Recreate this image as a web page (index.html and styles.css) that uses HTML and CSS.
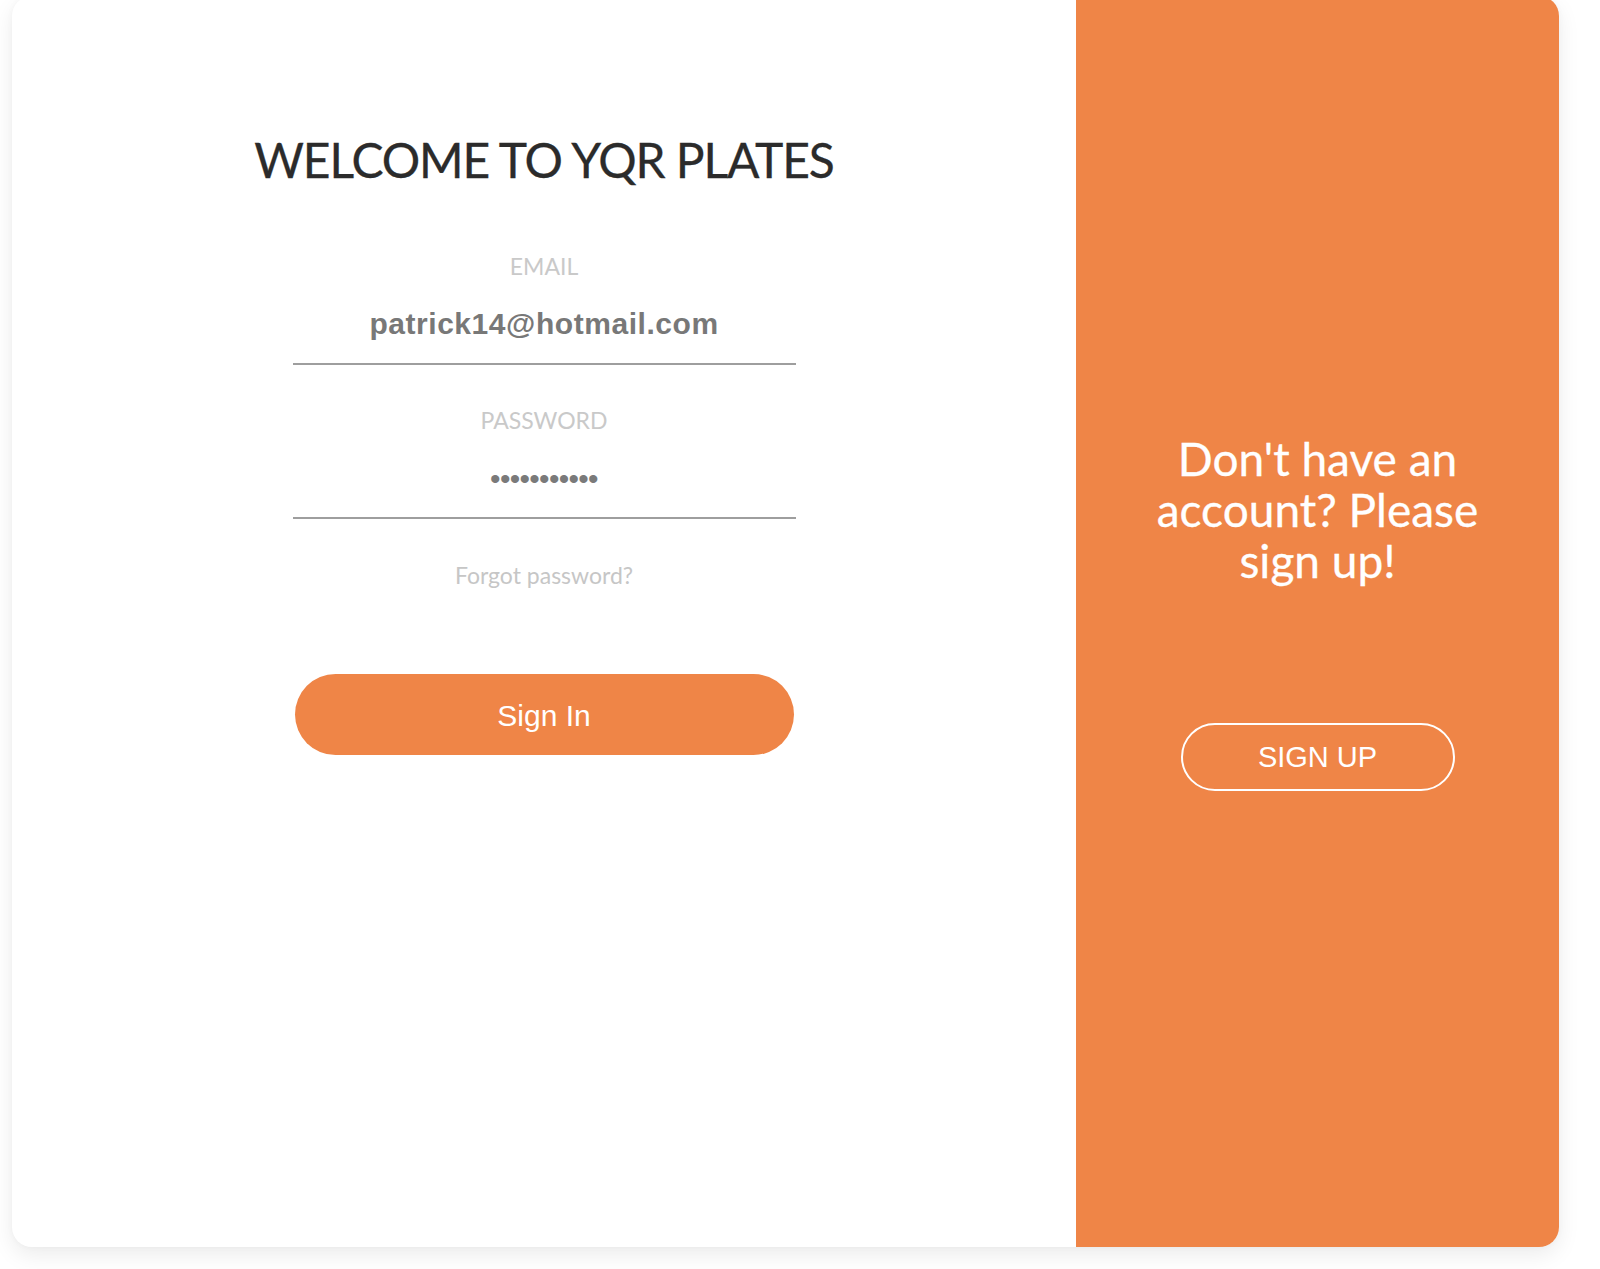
FILE: index.html
```html
<!DOCTYPE html>
<html lang="en">
<head>
<meta charset="utf-8">
<title>YQR Plates - Sign In</title>
<link rel="stylesheet" href="styles.css">
</head>
<body>
<div class="page">
  <div class="card">
    <section class="signin">
      <h1 class="title">WELCOME TO YQR PLATES</h1>
      <div class="field">
        <div class="label">EMAIL</div>
        <div class="value email">patrick14@hotmail.com</div>
      </div>
      <div class="field field-pass">
        <div class="label">PASSWORD</div>
        <div class="value dots">•••••••••••</div>
      </div>
      <a class="forgot">Forgot password?</a>
      <button class="btn-signin">Sign In</button>
    </section>
    <aside class="signup">
      <h2 class="signup-text">Don't have an account? Please sign up!</h2>
      <button class="btn-signup">SIGN UP</button>
    </aside>
  </div>
</div>
</body>
</html>
```
FILE: styles.css
```css
* { box-sizing: border-box; }
html, body { margin: 0; padding: 0; background: #ffffff; }
body { width: 1600px; height: 1269px; overflow: hidden; }

.page {
  padding-left: 12px;
}

.card {
  width: 1547px;
  height: 1251px;
  margin-top: -4px;
  display: flex;
  background: #ffffff;
  border-radius: 20px;
  box-shadow: 0 8px 22px rgba(0, 0, 0, 0.08), 0 0 6px rgba(0, 0, 0, 0.03);
}

.signin {
  width: 1064px;
  display: flex;
  flex-direction: column;
  align-items: center;
  padding-top: 135px;
}

.title {
  margin: 0;
  font-family: "Lato", "Noto Sans", sans-serif;
  font-weight: 400;
  font-size: 48px;
  line-height: 58px;
  letter-spacing: -1.1px;
  color: #2b2b2b;
  -webkit-text-stroke: 0.3px #2b2b2b;
}

.field {
  width: 503px;
  margin-top: 64px;
  border-bottom: 2px solid #9e9e9e;
  padding-bottom: 22px;
  text-align: center;
}
.field-pass {
  margin-top: 42px;
  padding-bottom: 21px;
}

.label {
  font-family: "Lato", "Noto Sans", sans-serif;
  font-size: 23px;
  line-height: 26px;
  color: #c9c9c9;
}

.value {
  margin-top: 28px;
  font-family: "Liberation Sans", Arial, sans-serif;
  font-weight: 700;
  font-size: 30px;
  line-height: 34px;
  color: #787878;
}
.email { letter-spacing: 0.55px; }
.dots {
  margin-top: 29px;
  font-size: 30px;
  font-weight: 400;
  letter-spacing: -0.7px;
  color: #7a7a7a;
}

.forgot {
  margin-top: 43px;
  font-family: "Lato", "Noto Sans", sans-serif;
  font-size: 23px;
  line-height: 26px;
  color: #c6c6c6;
}

.btn-signin {
  margin-top: 86px;
  width: 499px;
  height: 81px;
  border: none;
  border-radius: 41px;
  background: #ef8547;
  color: #ffffff;
  font-family: "Liberation Sans", Arial, sans-serif;
  font-size: 30px;
  padding: 3px 0 0;
}

.signup {
  flex: 1;
  background: #ef8547;
  border-radius: 0 20px 20px 0;
  display: flex;
  flex-direction: column;
  align-items: center;
  justify-content: center;
  padding-bottom: 19px;
}

.signup-text {
  margin: 0;
  width: 380px;
  text-align: center;
  font-family: "Lato", "Noto Sans", sans-serif;
  font-weight: 400;
  font-size: 46px;
  line-height: 51px;
  color: #ffffff;
  -webkit-text-stroke: 0.3px #ffffff;
}

.btn-signup {
  margin-top: 137px;
  width: 274px;
  height: 68px;
  border: 2px solid #ffffff;
  border-radius: 34px;
  background: transparent;
  color: #ffffff;
  font-family: "Liberation Sans", Arial, sans-serif;
  font-size: 29px;
  padding: 1px 0 0;
}
```
